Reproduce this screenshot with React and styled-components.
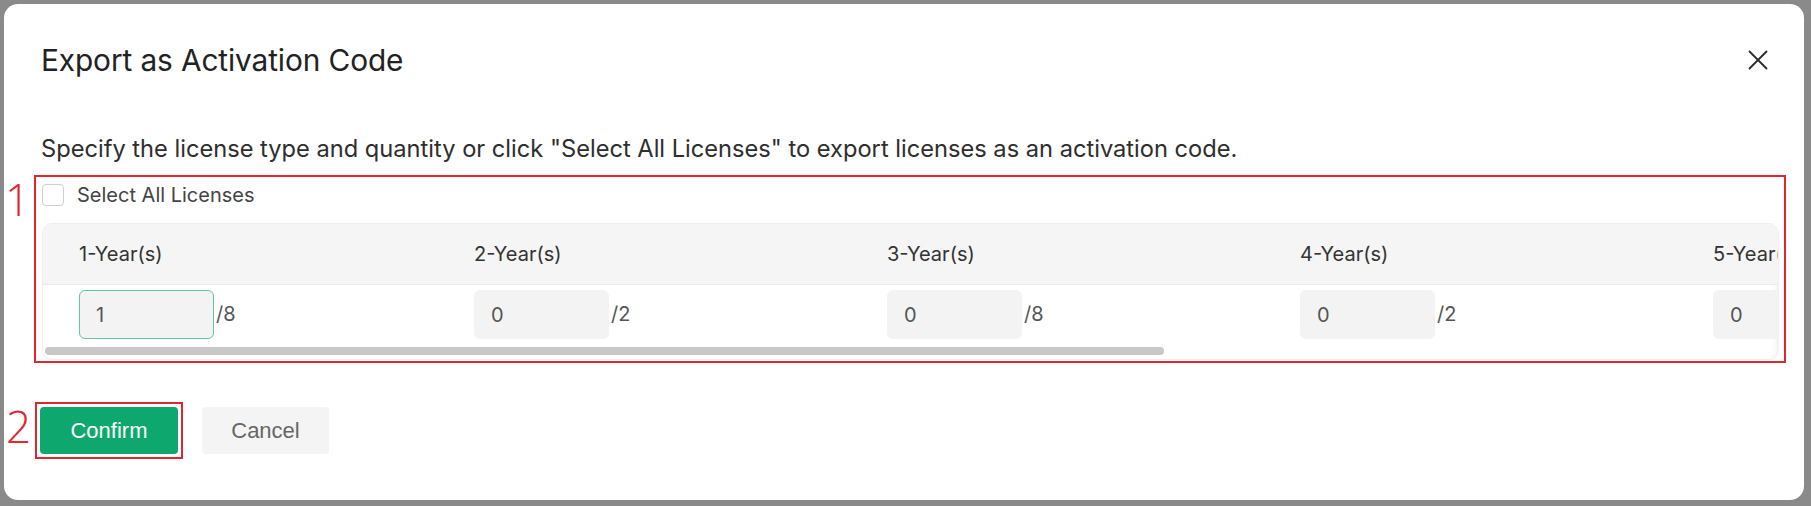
import React from "react";
import styled, { createGlobalStyle } from "styled-components";

const Global = createGlobalStyle`
  html, body { margin: 0; padding: 0; }
  body {
    background: #8a8a8a;
    font-family: Inter, "Noto Sans", sans-serif;
    width: 1811px;
    height: 506px;
    overflow: hidden;
  }
  * { box-sizing: border-box; }
`;

const Backdrop = styled.div`
  padding: 4px 7px 6px 4px;
  height: 506px;
`;

const Dialog = styled.div`
  background: #ffffff;
  border-radius: 14px;
  height: 496px;
  padding: 36px 36px 0 37px;
  display: flex;
  flex-direction: column;
`;

const Header = styled.div`
  display: flex;
  align-items: center;
  justify-content: space-between;
  height: 40px;
`;

const Title = styled.h2`
  margin: 0;
  font-size: 29.8px;
  font-weight: 400;
  color: #222;
  letter-spacing: -0.1px;
`;

const CloseButton = styled.button`
  border: 0;
  background: none;
  padding: 0;
  width: 20px;
  height: 20px;
  display: flex;
  align-items: center;
  justify-content: center;
  color: #2a2a2a;
  cursor: pointer;
`;

const Description = styled.p`
  margin: 53px 0 0;
  font-size: 23.65px;
  line-height: 32px;
  color: #2e2e2e;
  white-space: nowrap;
`;

const Marked = styled.div`
  position: relative;
  border: 2px solid #e0262f;
  padding: ${(p) => p.$pad};
  margin: ${(p) => p.$margin};
  align-self: ${(p) => p.$align || "stretch"};
`;

const MarkLabel = styled.span`
  position: absolute;
  right: calc(100% + 6px);
  top: 0;
  font-family: "Open Sans", sans-serif;
  font-weight: 300;
  font-size: 44px;
  line-height: 1;
  color: #e0262f;
`;

const CheckRow = styled.label`
  display: flex;
  align-items: center;
  gap: 13px;
  height: 24px;
  font-size: 20px;
  color: #444;
`;

const CheckBox = styled.span`
  width: 22px;
  height: 22px;
  border: 1px solid #cfcfcf;
  border-radius: 4px;
  background: #fff;
`;

const TableFrame = styled.div`
  margin-top: 16px;
  border: 1px solid #efefef;
  border-radius: 10px;
  overflow: hidden;
  padding-bottom: 4px;
  box-shadow: inset -6px 0 6px -6px rgba(0, 0, 0, 0.1);
`;

const Viewport = styled.div`
  overflow: hidden;
`;

const Table = styled.div`
  width: 2684px;
  display: grid;
  grid-template-columns: 395px 413px 413px 413px 411px 1fr;
`;

const HeadCell = styled.div`
  background: #f5f5f5;
  border-bottom: 1px solid #ebebeb;
  height: 61px;
  padding-left: 36px;
  display: flex;
  align-items: center;
  font-size: 20px;
  color: #333;
  white-space: nowrap;
`;

const BodyCell = styled.div`
  height: 61px;
  padding: 5px 0 0 36px;
  display: flex;
  align-items: flex-start;
`;

const QtyInput = styled.input`
  width: 135px;
  height: 49px;
  border-radius: 6px;
  border: 1px solid ${(p) => (p.$active ? "#5ec9a0" : "transparent")};
  background: #f3f3f3;
  padding: 0 16px;
  font-family: Inter, sans-serif;
  font-size: 20px;
  color: #555;
  outline: none;
`;

const Total = styled.span`
  font-size: 20px;
  color: #555;
  margin-left: 2px;
  line-height: 49px;
`;

const ScrollTrack = styled.div`
  height: 8px;
  margin: 1px 2px 0;
`;

const ScrollThumb = styled.div`
  height: 8px;
  width: ${(p) => p.$width}px;
  border-radius: 4px;
  background: #c8c8c8;
`;

const Footer = styled.div`
  display: flex;
  align-items: center;
  gap: 19px;
  margin: 39px 0 0 -6px;
`;

const Button = styled.button`
  height: 47px;
  border: 0;
  border-radius: 4px;
  font-family: "Liberation Sans", Arial, sans-serif;
  font-size: 22px;
  cursor: pointer;
  background: ${(p) => (p.$primary ? "#0ea76d" : "#f4f4f4")};
  color: ${(p) => (p.$primary ? "#ffffff" : "#666666")};
  width: ${(p) => (p.$primary ? "138px" : "127px")};
`;

const licenses = [
  { label: "1-Year(s)", value: "1", total: 8, active: true },
  { label: "2-Year(s)", value: "0", total: 2 },
  { label: "3-Year(s)", value: "0", total: 8 },
  { label: "4-Year(s)", value: "0", total: 2 },
  { label: "5-Year(s)", value: "0", total: 8 },
  { label: "6-Year(s)", value: "0", total: 2 },
];

export default function App() {
  return (
    <>
      <Global />
      <Backdrop>
        <Dialog>
          <Header>
            <Title>Export as Activation Code</Title>
            <CloseButton aria-label="Close">
              <svg width="20" height="20" viewBox="0 0 20 20" fill="none">
                <path d="M1.5 1.5 18.5 18.5M18.5 1.5 1.5 18.5" stroke="currentColor" strokeWidth="1.8" strokeLinecap="round" />
              </svg>
            </CloseButton>
          </Header>
          <Description>
            Specify the license type and quantity or click "Select All Licenses" to export licenses as an activation code.
          </Description>
          <Marked $pad="6px 5px 1px 6px" $margin="10px -18px 0 -7px">
            <MarkLabel>1</MarkLabel>
            <CheckRow>
              <CheckBox />
              Select All Licenses
            </CheckRow>
            <TableFrame>
              <Viewport>
                <Table>
                  {licenses.map((l) => (
                    <HeadCell key={l.label}>{l.label}</HeadCell>
                  ))}
                  {licenses.map((l) => (
                    <BodyCell key={l.label + "b"}>
                      <QtyInput $active={l.active} defaultValue={l.value} />
                      <Total>/{l.total}</Total>
                    </BodyCell>
                  ))}
                </Table>
              </Viewport>
              <ScrollTrack>
                <ScrollThumb $width={1119} />
              </ScrollTrack>
            </TableFrame>
          </Marked>
          <Footer>
            <Marked $pad="3px" $margin="0" $align="flex-start">
              <MarkLabel>2</MarkLabel>
              <Button $primary>Confirm</Button>
            </Marked>
            <Button>Cancel</Button>
          </Footer>
        </Dialog>
      </Backdrop>
    </>
  );
}
